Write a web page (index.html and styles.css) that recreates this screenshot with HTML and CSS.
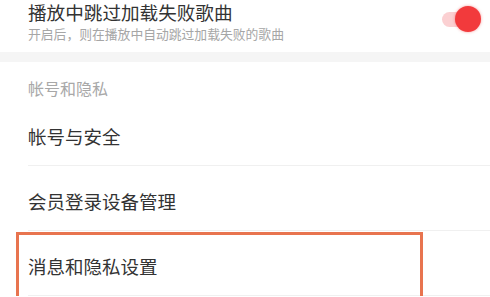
FILE: index.html
```html
<!DOCTYPE html>
<html lang="zh-CN">

<head>
    <meta charset="UTF-8">
    <meta name="viewport" content="width=device-width, initial-scale=1.0">
    <title>设置</title>
    <link rel="stylesheet" href="styles.css">
</head>

<body>

    <div class="settings">
        <div class="switch-row">
            <div class="switch-text">
                <div class="switch-title">播放中跳过加载失败歌曲</div>
                <div class="switch-desc">开启后，则在播放中自动跳过加载失败的歌曲</div>
            </div>
            <div class="toggle on">
                <span class="toggle-knob"></span>
            </div>
        </div>

        <div class="group-gap"></div>

        <div class="group-title">帐号和隐私</div>

        <div class="item">
            <span class="item-label">帐号与安全</span>
        </div>
        <div class="item">
            <span class="item-label">会员登录设备管理</span>
        </div>
        <div class="item">
            <span class="item-label">消息和隐私设置</span>
            <div class="highlight"></div>
        </div>
    </div>

</body>

</html>
```

FILE: styles.css
```css
body {
    font-family: "Noto Sans CJK SC", "Noto Sans", sans-serif;
    background-color: #fff;
    margin: 0;
    padding: 0;
    overflow: hidden;
}

.settings {
    width: 490px;
}

.switch-row {
    display: flex;
    align-items: flex-start;
    justify-content: space-between;
    height: 52px;
    padding-left: 28px;
    padding-top: 1px;
    box-sizing: border-box;
}

.switch-title {
    font-size: 18.6px;
    line-height: 22px;
    color: #333;
}

.switch-desc {
    font-size: 12.8px;
    line-height: 16px;
    color: #a6a6a6;
    margin-top: 3px;
}

.toggle {
    position: relative;
    width: 38px;
    height: 15px;
    margin-top: 11px;
    margin-right: 10px;
    border-radius: 8px;
    background-color: #fbd0d2;
}

.toggle-knob {
    position: absolute;
    right: -1px;
    top: -6px;
    width: 26px;
    height: 26px;
    border-radius: 50%;
    background-color: #f23a3c;
    box-shadow: 0 0 3px rgba(242, 58, 60, 0.5);
}

.group-gap {
    height: 10px;
    background-color: #f5f5f5;
}

.group-title {
    height: 39px;
    padding-left: 28px;
    padding-top: 17px;
    box-sizing: border-box;
    font-size: 16px;
    line-height: 18px;
    color: #a8a8a8;
}

.item {
    position: relative;
    display: flex;
    align-items: center;
    height: 65px;
    margin-left: 28px;
    padding-top: 6px;
    box-sizing: border-box;
    border-bottom: 1px solid #f0f0f0;
}

.item-label {
    font-size: 18.5px;
    color: #333;
}

.highlight {
    position: absolute;
    left: -12px;
    top: 1px;
    width: 407px;
    height: 90px;
    border: 3px solid #e8744f;
    box-sizing: border-box;
}
```
